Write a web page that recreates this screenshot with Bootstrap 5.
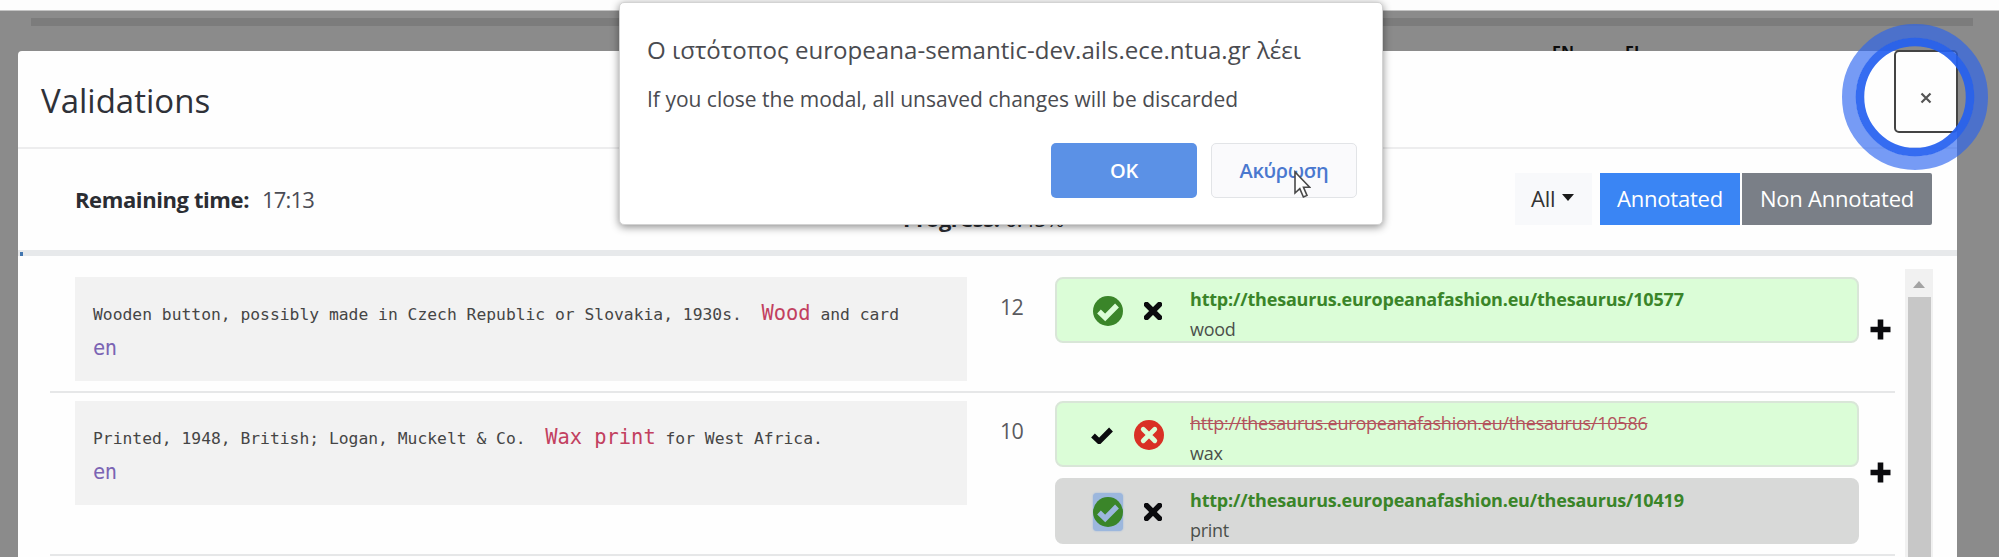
<!DOCTYPE html>
<html lang="el">
<head>
<meta charset="utf-8">
<meta name="viewport" content="width=device-width, initial-scale=1">
<title>Validations</title>
<link href="https://cdn.jsdelivr.net/npm/bootstrap@5.3.0/dist/css/bootstrap.min.css" rel="stylesheet">
<style>
body{font-family:"Open Sans","Noto Sans",sans-serif;background:#8b8b8b;color:#2b2d33;height:557px;overflow:hidden;white-space:nowrap}
.chrome-strip{height:11px;background:#fdfdfd;border-bottom:1px solid #c4c4c4}
.page-bar{height:8px;margin:7px 26px 0 31px;background:#7c7c7c}
.langs{padding:14px 356px 0 0;gap:51px;font:700 16px/24px "Open Sans",sans-serif;color:#0c0c0c}
.sheet{left:18px;top:51px;width:1939px;height:520px;background:#fefefe;border-radius:4px 4px 0 0}
.sheet-head{height:98px;padding:0 0 0 23px;border-bottom:2px solid #ededee}
.sheet-title{font-size:33px;font-weight:500;line-height:44px;margin:4px 0 0;color:#2f3138}
.close-box{width:64px;height:83px;margin:-1px -1px 0 0;border:2px solid #444;border-radius:5px;background:#fefefe;padding:13px 0 0}
.tools{height:101px;padding:0 25px 2px 57px;font-size:22px;line-height:30px}
.remain{font-weight:700;letter-spacing:-.4px}
.clock{letter-spacing:-.8px;margin-left:13px;color:#4a4c55}
.progress-label{left:885px;top:152px;font-size:22px;line-height:30px;letter-spacing:-.5px}
.tools .btn{height:52px;border:0;border-radius:0;font-size:22px;line-height:30px;padding:0 0 2px;letter-spacing:-.21px}
.tools .btn-all{width:77px;padding-left:16px;background:#f8f9fb;color:#333;margin-right:8px}
.btn-ann{width:140px;background:#3a85f4!important;color:#fff}
.btn-non{width:190px;background:#7a7f87!important;color:#fff;margin-left:2px!important;border-radius:0 2px 2px 0!important}
.caret{border:6.5px solid transparent;border-top:7.5px solid #1b1b1b;border-bottom:0;margin-left:7px}
.meter{height:6px;border-radius:0;background:#e7e9eb;padding:2px 0 0 2px}
.meter .progress-bar{height:4px;background:#4477b0}
.grid-area{padding:13px 24px 0 32px;height:310px}
.entry{border-bottom:2px solid #e6e7e8;padding:8px 0 10px 25px}
.snippet{width:892px;height:104px;background:#f2f2f2;padding:19px 19px 0 18px;font-family:"DejaVu Sans Mono",monospace;font-size:16.33px;line-height:34px;color:#454545}
.snippet .hit{font-size:20.4px;color:#c2405f;margin-left:9.8px;font-weight:400}
.snippet .lang{font-size:20.4px;letter-spacing:-.5px;color:#7b64b4;display:block;line-height:34px;margin-top:-1px}
.count{width:88px;padding:15px 0 0 33px;font-size:21.5px;line-height:30px;letter-spacing:-.8px;color:#5a5a5f}
.tag{width:804px;height:66px;border:2px solid #d9e6d8;border-radius:8px;background:#dbfdd7}
.tag.picked{background:#d8d9d8;border-color:#d8d9d8}
.icons{width:133px;padding:1px 0 0 36px;gap:21px}
.icons.alt{padding-left:34px}
.on{background:#9cb7dd;border-radius:4px;height:38px;box-shadow:0 0 2px #9cb7dd}
.uri{font-size:18px;line-height:30px;padding-top:5px;letter-spacing:-.2px}
.uri b{color:#3a8529}
.uri s{color:#b3525c;letter-spacing:-.24px}
.uri span{letter-spacing:-.28px;color:#4b504b}
.add{width:36px;padding-left:11px}
.scroller{width:28px;margin-left:10px;background:#f1f1f1}
.scroller i{border:6.5px solid transparent;border-bottom:7.5px solid #a3a3a3;border-top:0;margin:12px auto 0}
.thumb{width:23px;margin-top:9px;background:#c7c7c7}
.alertbox{left:619px;top:2px;width:764px;height:223px;background:#fff;border:1px solid #d3d3d3;border-radius:5px;box-shadow:0 2px 8px rgba(0,0,0,.45);padding:29px 25px 0 27px;color:#4a4b50}
.alertbox h6{font-size:24.1px;font-weight:400;line-height:36px;margin:0;letter-spacing:.01px}
.alertbox p{font-size:21px;line-height:30px;margin:16px 0 0}
.alertbox .btn{width:146px;height:55px;font-size:20px;font-weight:600;letter-spacing:-.3px;border-radius:5px;padding:0}
.ok{background:#5b91e6!important;color:#fff}
.cancel{background:#fafafc!important;color:#4a78cf;border:1px solid #e2e4e7!important}
.ring{left:1840px;top:21px}
.pointer{left:1292px;top:170px}
</style>
</head>
<body class="position-relative">
<svg width="0" height="0" class="position-absolute">
  <defs>
    <g id="tick"><path d="M2 9.500 8.200 15.400 20 3.500" fill="none" stroke-width="5.400"/></g>
    <g id="cross"><path d="M2.500 2.500 15.500 15.500M15.500 2.500 2.500 15.500" fill="none" stroke-width="5.400" stroke-linecap="round"/></g>
    <g id="plus"><path d="M10.500 .5v20M.5 10.500h20" fill="none" stroke-width="5.600"/></g>
  </defs>
</svg>

<div class="chrome-strip"></div>
<div class="page-bar"></div>
<div class="langs d-flex justify-content-end"><span>EN</span><span>EL</span></div>

<main class="sheet position-absolute">
  <header class="sheet-head d-flex justify-content-between">
    <h4 class="sheet-title align-self-center">Validations</h4>
    <button class="close-box d-flex justify-content-center align-items-center" aria-label="Close">
      <svg width="12" height="12" viewBox="0 0 12 12"><path d="M1.500 1.500l9 9M10.500 1.500l-9 9" stroke="#555" stroke-width="2.200"/></svg>
    </button>
  </header>

  <section class="tools d-flex align-items-center justify-content-between">
    <div><span class="remain">Remaining time:</span><span class="clock">17:13</span></div>
    <div class="progress-label position-absolute"><b>Progress:</b> 0.45%</div>
    <div class="d-flex">
      <button class="btn btn-all d-flex align-items-center">All<span class="caret"></span></button>
      <div class="btn-group">
        <button class="btn btn-ann">Annotated</button>
        <button class="btn btn-non">Non Annotated</button>
      </div>
    </div>
  </section>
  <div class="progress meter"><div class="progress-bar" style="width:.15%"></div></div>

  <section class="grid-area d-flex">
    <div class="flex-grow-1">
      <div class="entry d-flex">
        <div class="snippet">Wooden button, possibly made in Czech Republic or Slovakia, 1930s. <span class="hit">Wood</span> and card<span class="lang">en</span></div>
        <div class="count">12</div>
        <div class="tag d-flex">
          <div class="icons d-flex align-items-center">
            <svg width="30" height="30" viewBox="0 0 30 30"><circle cx="15" cy="15" r="15" fill="#3a8529"/><use href="#tick" stroke="#dbfdd7" transform="translate(4 6)"/></svg>
            <svg width="18" height="18" viewBox="0 0 18 18"><use href="#cross" stroke="#0b0b0e"/></svg>
          </div>
          <div class="uri d-flex flex-column"><b>http://thesaurus.europeanafashion.eu/thesaurus/10577</b><span>wood</span></div>
        </div>
        <div class="add d-flex align-items-center"><svg width="21" height="21"><use href="#plus" stroke="#0b0b0e"/></svg></div>
      </div>
      <div class="entry d-flex">
        <div class="snippet">Printed, 1948, British; Logan, Muckelt &amp; Co. <span class="hit">Wax print</span> for West Africa.<span class="lang">en</span></div>
        <div class="count">10</div>
        <div class="d-flex flex-column" style="gap:11px">
          <div class="tag d-flex">
            <div class="icons alt d-flex align-items-center">
              <svg width="22" height="18" viewBox="0 0 22 18"><use href="#tick" stroke="#0b0b0e"/></svg>
              <svg width="30" height="30" viewBox="0 0 30 30"><circle cx="15" cy="15" r="15" fill="#d93025"/><use href="#cross" stroke="#dbfdd7" transform="translate(7 7) scale(.89)"/></svg>
            </div>
            <div class="uri d-flex flex-column"><s>http://thesaurus.europeanafashion.eu/thesaurus/10586</s><span>wax</span></div>
          </div>
          <div class="tag picked d-flex">
            <div class="icons d-flex align-items-center">
              <div class="on d-flex align-items-center"><svg width="30" height="30" viewBox="0 0 30 30"><circle cx="15" cy="15" r="15" fill="#3a8529"/><use href="#tick" stroke="#9cb7dd" transform="translate(4 6)"/></svg></div>
              <svg width="18" height="18" viewBox="0 0 18 18"><use href="#cross" stroke="#0b0b0e"/></svg>
            </div>
            <div class="uri d-flex flex-column"><b>http://thesaurus.europeanafashion.eu/thesaurus/10419</b><span>print</span></div>
          </div>
        </div>
        <div class="add d-flex align-items-center"><svg width="21" height="21"><use href="#plus" stroke="#0b0b0e"/></svg></div>
      </div>
    </div>
    <div class="scroller d-flex flex-column align-items-center"><i></i><div class="thumb flex-grow-1"></div></div>
  </section>
</main>

<svg class="ring position-absolute" width="150" height="152" viewBox="0 0 150 152">
  <circle cx="75" cy="76" r="66" fill="none" stroke="#2862f0" stroke-opacity=".64" stroke-width="14"/>
  <circle cx="75" cy="76" r="55" fill="none" stroke="#2460f0" stroke-opacity=".92" stroke-width="8.500"/>
</svg>

<div class="alertbox position-absolute" role="alertdialog">
  <h6>Ο ιστότοπος europeana-semantic-dev.ails.ece.ntua.gr λέει</h6>
  <p>If you close the modal, all unsaved changes will be discarded</p>
  <div class="d-flex justify-content-end" style="gap:14px;margin-top:29px">
    <button class="btn ok">OK</button>
    <button class="btn cancel">Ακύρωση</button>
  </div>
</div>

<svg class="pointer position-absolute" width="19" height="30" viewBox="0 0 19 30"><path d="M3 2v21l4.800-4.400 3.600 8.400 3.600-1.600-3.500-8.200h6.200z" fill="#fff" stroke="#4a4a4a" stroke-width="1.600"/></svg>
<script src="https://cdn.jsdelivr.net/npm/bootstrap@5.3.0/dist/js/bootstrap.bundle.min.js"></script>
</body>
</html>
